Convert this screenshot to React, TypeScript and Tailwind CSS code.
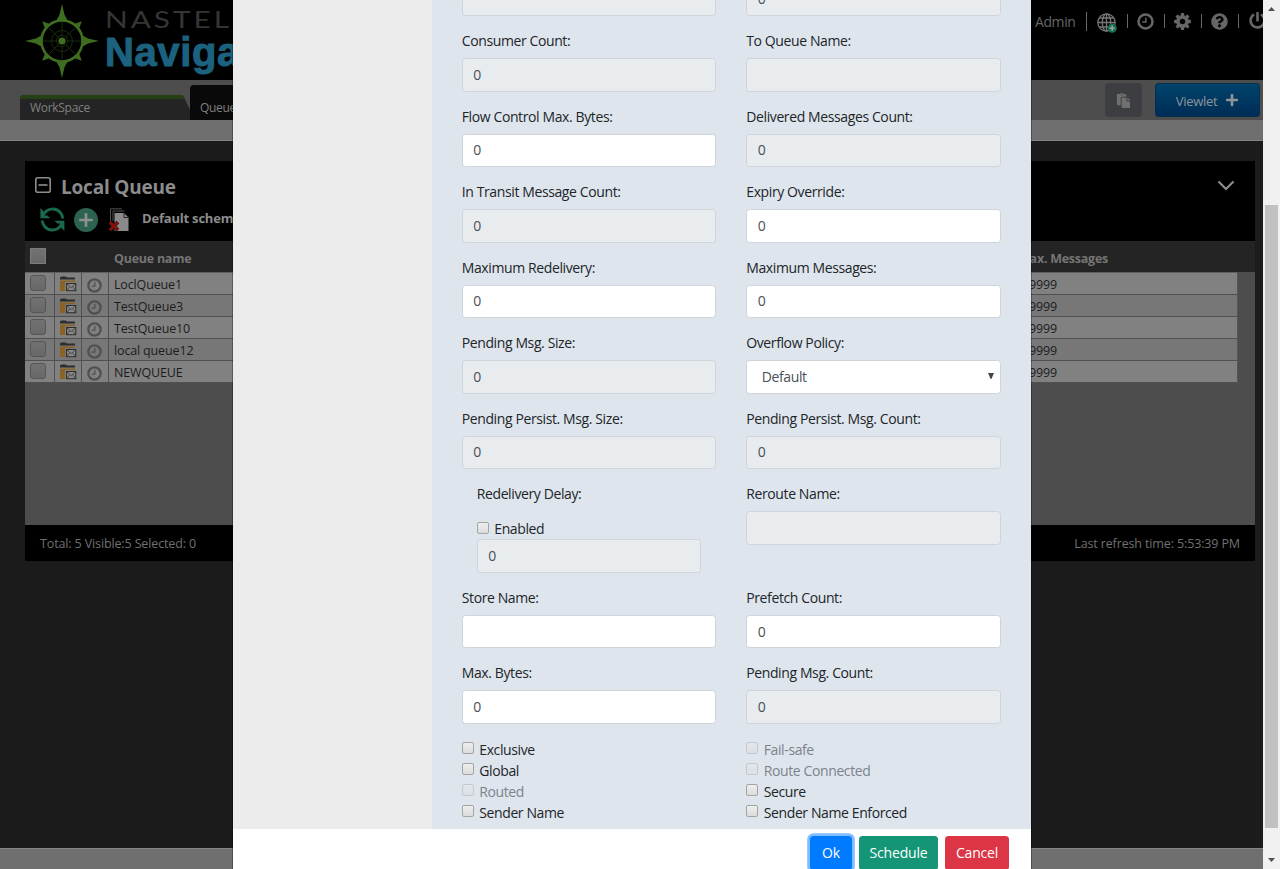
import React from "react";
import { FaPaste, FaPlus, FaPowerOff, FaQuestionCircle } from "react-icons/fa";

type FieldData = {
  label: string;
  value?: string;
  disabled?: boolean;
  kind?: "select" | "delay";
};

const leftFields: FieldData[] = [
  { label: "Consumer Count:", value: "0", disabled: true },
  { label: "Flow Control Max. Bytes:", value: "0" },
  { label: "In Transit Message Count:", value: "0", disabled: true },
  { label: "Maximum Redelivery:", value: "0" },
  { label: "Pending Msg. Size:", value: "0", disabled: true },
  { label: "Pending Persist. Msg. Size:", value: "0", disabled: true },
  { label: "Redelivery Delay:", value: "0", disabled: true, kind: "delay" },
  { label: "Store Name:" },
  { label: "Max. Bytes:", value: "0" },
];

const rightFields: FieldData[] = [
  { label: "To Queue Name:", disabled: true },
  { label: "Delivered Messages Count:", value: "0", disabled: true },
  { label: "Expiry Override:", value: "0" },
  { label: "Maximum Messages:", value: "0" },
  { label: "Overflow Policy:", value: "Default", kind: "select" },
  { label: "Pending Persist. Msg. Count:", value: "0", disabled: true },
  { label: "Reroute Name:", disabled: true },
  { label: "Prefetch Count:", value: "0" },
  { label: "Pending Msg. Count:", value: "0", disabled: true },
];

const leftChecks = [
  { label: "Exclusive" },
  { label: "Global" },
  { label: "Routed", disabled: true },
  { label: "Sender Name" },
];

const rightChecks = [
  { label: "Fail-safe", disabled: true },
  { label: "Route Connected", disabled: true },
  { label: "Secure" },
  { label: "Sender Name Enforced" },
];

const queues = ["LoclQueue1", "TestQueue3", "TestQueue10", "local queue12", "NEWQUEUE"];

function Box({ value = "", disabled = false }: { value?: string; disabled?: boolean }) {
  return (
    <div
      className={`flex h-[33.5px] items-center rounded-[3.5px] border border-[#ced4da] px-[10.5px] pb-px text-[#495057] ${
        disabled ? "bg-[#e9ecef]" : "bg-white"
      }`}
    >
      {value}
    </div>
  );
}

function Check({ label, disabled = false }: { label: string; disabled?: boolean }) {
  return (
    <div className={`flex h-[21px] items-center ${disabled ? "text-[#7b838c]" : ""}`}>
      <span
        className={`mr-[5.5px] mb-[2px] h-3 w-3 shrink-0 rounded-[2px] border bg-linear-to-b ${
          disabled
            ? "border-[#c5c9ce] from-[#e3e7ec] to-[#dcdfe4]"
            : "border-[#a4a4a4] from-[#eeeeee] to-[#dcdcdc]"
        }`}
      />
      {label}
    </div>
  );
}

function Field({ field }: { field: FieldData }) {
  if (field.kind === "delay") {
    return (
      <div className="mb-[14px] h-[89.75px] px-[15px]">
        <div className="mb-[14.25px] h-[21px]">{field.label}</div>
        <Check label="Enabled" />
        <Box value={field.value} disabled />
      </div>
    );
  }
  return (
    <div className={`mb-[14px] ${field.label === "Reroute Name:" ? "h-[89.75px]" : ""}`}>
      <div className="mb-[7px] h-[21px]">{field.label}</div>
      {field.kind === "select" ? (
        <div className="flex h-[33.5px] items-center justify-between rounded-[3.5px] border border-[#ced4da] bg-white pr-[6px] pb-px pl-[14.5px] text-[#495057]">
          <span>{field.value}</span>
          <svg width="6" height="6" viewBox="0 0 6 6">
            <path d="M0 0H6L3.4 6H2.6Z" fill="#404548" />
          </svg>
        </div>
      ) : (
        <Box value={field.value} disabled={field.disabled} />
      )}
    </div>
  );
}

function Compass() {
  const diagonals = [45, 135, 225, 315];
  return (
    <svg width="74" height="76" viewBox="-37 -38 74 76" className="shrink-0">
      <g fill="#3e6c21">
        {[0, 90, 180, 270].map((a) => (
          <path key={a} d="M0 -37L2.6 -26L6 -20H-6L-2.6 -26Z" transform={`rotate(${a})`} />
        ))}
        {diagonals.map((a) => (
          <path key={a} d="M0 -28L3.6 -20H-3.6Z" transform={`rotate(${a})`} />
        ))}
        <circle r="3.6" />
      </g>
      <circle r="20.5" fill="none" stroke="#3e6c21" strokeWidth="2.6" />
      <g fill="none" stroke="#1b3010" strokeWidth="0.9">
        <circle r="10.5" />
        {[0, 45, 90, 135].map((a) => (
          <path key={a} d="M0 -19V-5M0 5V19" transform={`rotate(${a})`} />
        ))}
        <circle r="5.5" />
      </g>
    </svg>
  );
}

function Clock({ size, className }: { size: number; className: string }) {
  return (
    <svg width={size} height={size} viewBox="0 0 18 18" fill="none" stroke="currentColor" className={className}>
      <circle cx="9" cy="9" r="7.4" strokeWidth="2.7" />
      <path d="M9.4 4.8V9.6H5.6" strokeWidth="1.5" />
    </svg>
  );
}

function Gear() {
  return (
    <svg width="17" height="17" viewBox="-8.5 -8.5 17 17" className="mx-[9.5px] shrink-0">
      <circle r="4.5" fill="none" stroke="currentColor" strokeWidth="3.6" />
      {[0, 45, 90, 135, 180, 225, 270, 315].map((a) => (
        <path key={a} d="M-1.9 -5.4L-1.5 -8.4H1.5L1.9 -5.4Z" fill="currentColor" transform={`rotate(${a})`} />
      ))}
    </svg>
  );
}

function GlobeAdd() {
  return (
    <svg width="20" height="20" viewBox="0 0 20 20" fill="none" stroke="#777" strokeWidth="1.3" className="shrink-0">
      <circle cx="9.5" cy="9.5" r="8.7" />
      <ellipse cx="9.5" cy="9.5" rx="4.2" ry="8.7" />
      <path d="M9.5 1V18M1 9.5H18M2.2 5H16.8M2.2 14H16.8" />
      <circle cx="15.2" cy="15.2" r="4.6" fill="#14704e" stroke="none" />
      <path d="M15.2 12.6V17.8M12.6 15.2H17.8" stroke="#a0a0a0" strokeWidth="1.6" />
    </svg>
  );
}

function Refresh() {
  return (
    <svg width="25" height="25" viewBox="0 0 25 25" className="shrink-0">
      <g fill="none" stroke="#19694a" strokeWidth="2.9">
        <path d="M3.6 7.6C6.5 1.4 15.5-.2 20.3 5.5C21.8 7.2 22.5 9.2 22.6 11.5" />
        <path d="M2.2 13.5C2.3 15.8 3.2 17.8 4.7 19.5C9.5 25.2 18.5 23.6 21.4 17.4" />
      </g>
      <path d="M.4 1V11.2H10.2L7.4 8.5H4.8L3.8 4.5Z" fill="#19694a" />
      <path d="M24.4 24V13.8H14.6L17.4 16.5H20L21 20.5Z" fill="#19694a" />
    </svg>
  );
}

function AddCircle() {
  return (
    <svg width="24" height="24" viewBox="0 0 24 24" className="shrink-0">
      <circle cx="12" cy="12" r="12" fill="#2b6350" />
      <path d="M12 5.2V18.8M5.2 12H18.8" stroke="#909090" strokeWidth="2.7" />
    </svg>
  );
}

function DeletePages() {
  return (
    <svg width="20" height="24" viewBox="0 0 20 24" className="shrink-0">
      <path d="M1.5 13V.8H13M4 13V3H15.5" fill="none" stroke="#505050" />
      <path d="M5.5 5H15L19.5 9.5V23H5.5Z" fill="#8a8a8a" />
      <path d="M15 5V9.5H19.5" fill="none" stroke="#222" />
      <path d="M.8 14.2L8.8 22.2M8.8 14.2L.8 22.2" stroke="#222" strokeWidth="4" />
      <path d="M.8 14.2L8.8 22.2M8.8 14.2L.8 22.2" stroke="#8b0e08" strokeWidth="2.5" />
    </svg>
  );
}

function FolderMail() {
  return (
    <svg width="17" height="16" viewBox="0 0 17 16">
      <path d="M0 3.4V1.6L1.5.4H5.5L7 1.6H15V3.4Z" fill="#2c2c2c" />
      <path d="M0 4.4H15V6H5V15H0Z" fill="#8b6224" />
      <rect x="6.6" y="7.5" width="9.2" height="7.2" fill="#8a8a8a" stroke="#2c2c2c" strokeWidth="1" />
      <path d="M7 8L11.2 11.6L15.4 8M7 14.4L9.8 10.8M15.4 14.4L12.6 10.8" fill="none" stroke="#2c2c2c" strokeWidth=".7" />
    </svg>
  );
}

function Divider({ tall = false }: { tall?: boolean }) {
  return <span className={`w-px shrink-0 bg-[#666] ${tall ? "h-[19px]" : "h-[14px]"}`} />;
}

function TopBar() {
  return (
    <header className="flex h-20 items-start justify-between overflow-hidden bg-black">
      <div className="flex pt-[3px] pl-[25px]">
        <Compass />
        <div className="flex flex-col whitespace-nowrap pl-[6px]">
          <span className="h-[30px] origin-left scale-x-[1.24] font-[Lato] text-[24px] leading-[32px] tracking-[2.4px] text-[#353535]">
            NASTEL
          </span>
          <span className="mt-px font-['Liberation_Sans'] text-[40px] leading-[36px] font-bold tracking-[0.6px] text-[#1c627f] [-webkit-text-stroke:1px_#1c627f]">
            Navigator
          </span>
        </div>
      </div>
      <div className="-mr-[3px] flex h-[42px] items-center text-[#666]">
        <span className="mr-[10px] text-[14px] tracking-[-0.4px]">Admin</span>
        <Divider tall />
        <span className="mr-[10px] ml-[10px] pt-[3px]">
          <GlobeAdd />
        </span>
        <Divider />
        <Clock size={17} className="mx-[9.5px]" />
        <Divider />
        <Gear />
        <Divider />
        <FaQuestionCircle size={17} className="mx-[9.5px]" />
        <Divider />
        <FaPowerOff size={17} className="mb-[2px] ml-[10.5px]" />
      </div>
    </header>
  );
}

function TabBar() {
  return (
    <div className="flex h-10 justify-between bg-[#4d4d4d] pl-5">
      <div className="flex items-end text-[12px] tracking-[-0.3px] text-[#808080]">
        <div className="h-[25px] w-[170px] rounded-tl-[3px] border-t-4 border-[#254015] bg-[#242424] pl-[10px] leading-[18px] [clip-path:polygon(0_0,163px_0,170px_15px,170px_100%,0_100%)]">
          WorkSpace
        </div>
        <div className="h-[35px] w-[160px] rounded-t-[4px] bg-[#090909] pl-[10px] leading-[45px]">Queue</div>
      </div>
      <div className="flex items-start gap-[13px] pt-[3px] pr-[3px]">
        <div className="flex h-[34px] w-[37px] items-center justify-center rounded-[4px] bg-[#3d3e42] text-[#707070]">
          <FaPaste size={15} />
        </div>
        <div className="flex h-[34px] w-[105px] items-center justify-center gap-2 rounded-[3px] border border-[#06304a] bg-linear-to-b from-[#00436b] to-[#002d57] text-[13px] tracking-[-0.3px] text-[#8f9498]">
          <span className="pt-[3px]">Viewlet</span>
          <FaPlus size={14} />
        </div>
      </div>
    </div>
  );
}

function MiniCheck({ square = false }: { square?: boolean }) {
  return (
    <span
      className={`block h-4 w-4 bg-linear-to-b from-[#727272] to-[#686868] ${
        square ? "mb-[2px] border border-[#7c7c7c]" : "rounded-[3px] border border-[#565656]"
      }`}
    />
  );
}

function QueuePanel() {
  return (
    <section className="mx-[25px] mt-5 mr-2 flex h-[400px] flex-col bg-black">
      <div className="flex h-20 justify-between">
        <div className="flex flex-col">
          <div className="flex h-[42px] items-center pt-[9px] pl-[10px]">
            <svg width="16" height="16" viewBox="0 0 16 16" fill="none" stroke="#8c8c8c" strokeWidth="1.6" className="mb-[3px]">
              <rect x=".8" y=".8" width="14.4" height="14.4" rx="2" />
              <path d="M3.5 8H12.5" />
            </svg>
            <span className="ml-[10px] pt-[2px] text-[19px] font-bold tracking-[-0.2px] text-[#8c8c8c]">Local Queue</span>
          </div>
          <div className="flex h-[33px] items-center pl-[15px]">
            <Refresh />
            <span className="ml-[9px]">
              <AddCircle />
            </span>
            <span className="ml-[11px]">
              <DeletePages />
            </span>
            <span className="mb-[2px] ml-[13px] text-[13px] font-bold tracking-[-0.2px] whitespace-nowrap text-[#8c8c8c]">
              Default schema
            </span>
          </div>
        </div>
        <svg width="18" height="12" viewBox="0 0 18 12" fill="none" stroke="#8c8c8c" strokeWidth="2.2" className="mt-[19px] mr-5">
          <path d="M1.5 1.5L9 9L16.5 1.5" />
        </svg>
      </div>
      <div className="flex h-[31px] shrink-0 items-center justify-between bg-[#242424] pr-[147px] pl-[5px] text-[12.5px] font-bold tracking-[-0.25px] text-[#757575]">
        <div className="flex items-center">
          <MiniCheck square />
          <span className="ml-[68px] pt-[5px]">Queue name</span>
        </div>
        <span className="pt-[5px]">Max. Messages</span>
      </div>
      <div className="flex-1 bg-[#4d4d4d] pr-[17px]">
        <div className="border-t border-r border-[#606060] border-r-[#555]">
          {queues.map((name, i) => (
            <div
              key={name}
              className={`flex h-[22px] border-b border-[#505050] text-[12.5px] tracking-[-0.15px] text-[#1c1c1c] ${
                i % 2 ? "bg-[#777]" : "bg-[#818181]"
              }`}
            >
              <div className="w-[30px] border-r border-[#505050] pt-[2px] pl-[5px]">
                <MiniCheck />
              </div>
              <div className="w-[27px] border-r border-[#505050] pt-[3px] pl-[5px]">
                <FolderMail />
              </div>
              <div className="w-[27px] border-r border-[#505050] pt-[4.5px] pl-[5px]">
                <Clock size={15} className="text-[#505050]" />
              </div>
              <div className="flex-1 pl-[5px] leading-[24px]">{name}</div>
              <div className="w-[243px] leading-[24px]">999999999</div>
            </div>
          ))}
        </div>
      </div>
      <div className="flex h-9 shrink-0 items-center justify-between px-[15px] pt-[2px] text-[12.5px] font-medium tracking-[-0.13px] text-[#707070]">
        <span>Total: 5 Visible:5 Selected: 0</span>
        <span>Last refresh time: 5:53:39 PM</span>
      </div>
    </section>
  );
}

function Column({
  fields,
  checks,
  top = "",
  width,
}: {
  fields: FieldData[];
  checks: { label: string; disabled?: boolean }[];
  top?: string;
  width: string;
}) {
  return (
    <div className={width}>
      <div className="mb-[14px]">
        <Box value={top} disabled />
      </div>
      {fields.map((f) => (
        <Field key={f.label} field={f} />
      ))}
      <div className="pt-[0.75px]">
        {checks.map((c) => (
          <Check key={c.label} {...c} />
        ))}
      </div>
    </div>
  );
}

function QueueDialog() {
  return (
    <div className="absolute -top-[18px] left-[232px] flex h-[900px] w-[800px] flex-col border-x border-black/30 bg-clip-padding text-[14px] leading-[21px] tracking-[-0.39px] text-[#212529]">
      <div className="flex h-[846.5px] shrink-0">
        <div className="w-[199px] bg-[#ebebeb]" />
        <div className="flex flex-1 gap-[30.25px] bg-[#dfe5ed] pt-[0.5px] pl-[29.75px]">
          <Column fields={leftFields} checks={leftChecks} width="w-[254.25px]" />
          <Column fields={rightFields} checks={rightChecks} top="0" width="w-[254.5px]" />
        </div>
      </div>
      <div className="flex flex-1 items-start justify-end gap-[7px] bg-white pt-[7.5px] pr-[22px] text-[14px] tracking-[-0.2px] text-white">
        <button className="h-[33.5px] w-[42px] rounded-[3.5px] bg-[#007bff] shadow-[0_0_0_2.8px_#80bdff]">Ok</button>
        <button className="h-[33.5px] w-[79px] rounded-[3.5px] bg-[#149575]">Schedule</button>
        <button className="h-[33.5px] w-[64px] rounded-[3.5px] bg-[#dc3545]">Cancel</button>
      </div>
    </div>
  );
}

export default function App() {
  return (
    <div className="relative flex h-[869px] w-[1280px] overflow-hidden bg-[#1b1b1b] font-['Open_Sans','Noto_Sans',sans-serif]">
      <div className="flex w-[1263px] flex-col overflow-hidden">
        <TopBar />
        <TabBar />
        <div className="h-[21px] border-b border-[#858585] bg-[#6f6f6f]" />
        <QueuePanel />
        <div className="mt-auto h-[21px] border-t border-[#858585] bg-[#6f6f6f]" />
      </div>
      <div className="flex w-[17px] flex-col items-center justify-between bg-[#f1f1f1] py-[7px]">
        <svg width="7" height="4" viewBox="0 0 7 4">
          <path d="M0 4L3.5 0L7 4Z" fill="#505050" />
        </svg>
        <div className="mt-[194px] h-[623px] w-[13px] bg-[#c1c1c1]" />
        <svg width="7" height="4" viewBox="0 0 7 4" className="mt-auto">
          <path d="M0 0L3.5 4L7 0Z" fill="#505050" />
        </svg>
      </div>
      <QueueDialog />
    </div>
  );
}
